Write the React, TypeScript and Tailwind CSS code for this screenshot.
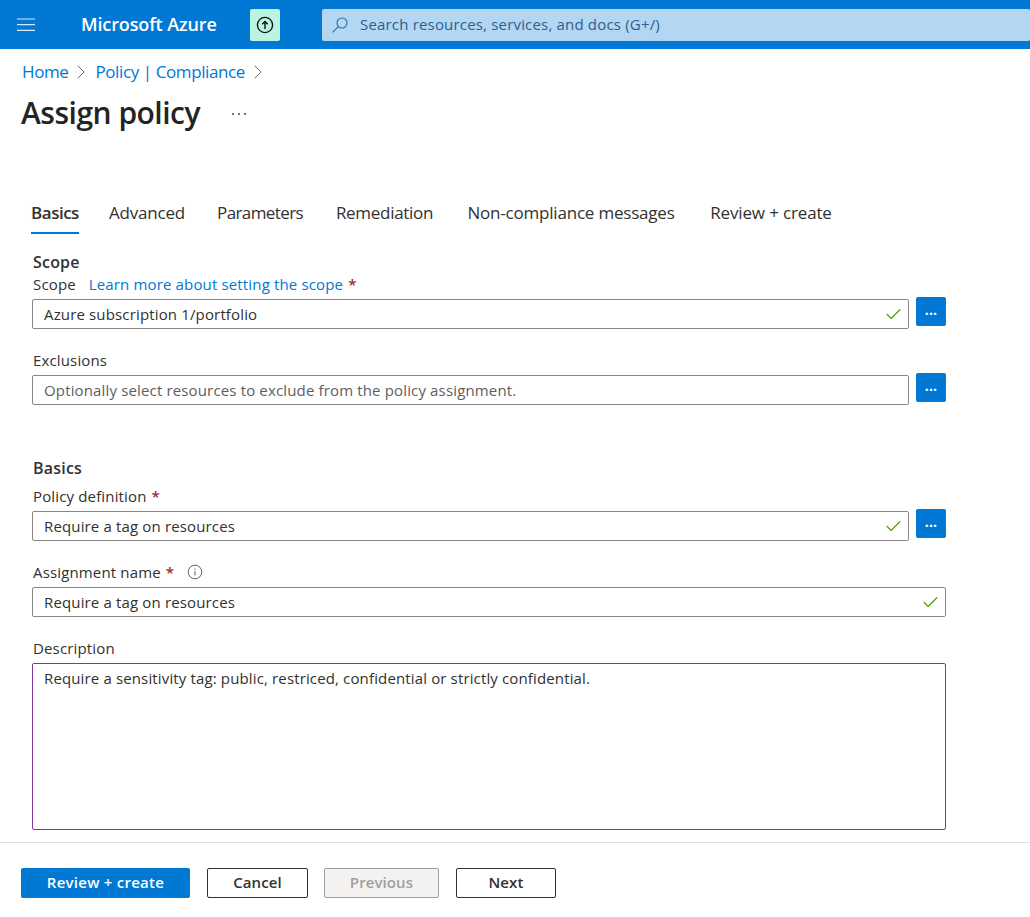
import { Check, ChevronRight } from "lucide-react";

const font = "font-['Open_Sans','Noto_Sans',sans-serif]";

function Star() {
  return <span className="ml-[5px] text-[15px] font-semibold text-[#a4262c]">*</span>;
}

function Field({ value, placeholder, check }: { value?: string; placeholder?: string; check?: boolean }) {
  return (
    <div className="flex h-[30px] min-w-0 flex-1 items-center justify-between rounded-[2px] border border-[#8a8886] bg-white pl-[11px] pr-[5px]">
      <span className={`text-[15px] tracking-[0.15px] ${value ? "text-[#323130]" : "text-[#605e5c]"}`}>{value || placeholder}</span>
      {check && <Check size={19} strokeWidth={1.6} className="text-[#57a300]" />}
    </div>
  );
}

function DotsButton() {
  return (
    <button className="ml-[7px] -mt-[2px] flex h-[29px] w-[30px] shrink-0 items-end justify-center rounded-[2px] bg-[#0078d4] pb-[9px] text-[14px] font-bold leading-none text-white">
      ...
    </button>
  );
}

const tabs = [
  { name: "Advanced", width: "w-[76px]", ml: "ml-[30px]", tracking: "tracking-[-0.2px]" },
  { name: "Parameters", width: "w-[86px]", ml: "ml-[32px]", tracking: "tracking-[-0.6px]" },
  { name: "Remediation", width: "w-[97px]", ml: "ml-[33px]", tracking: "tracking-[-0.3px]" },
  { name: "Non-compliance messages", width: "w-[208px]", ml: "ml-[34px]", tracking: "tracking-[-0.2px]" },
  { name: "Review + create", width: "w-[122px]", ml: "ml-[35px]", tracking: "tracking-[-0.15px]" },
];

export default function App() {
  return (
    <div className={`flex h-[917px] w-[1030px] flex-col overflow-hidden bg-white text-[#323130] ${font}`}>
      {/* top bar */}
      <header className="flex h-[49px] shrink-0 items-center bg-[#0078d4] text-white">
        <svg width="18" height="14" viewBox="0 0 18 14" fill="none" stroke="#d5e9f8" strokeWidth="1.2" className="ml-[17px]">
          <path d="M0 1h18M0 6.6h18M0 12.4h18" />
        </svg>
        <span className="ml-[46px] w-[136px] whitespace-nowrap text-[18px] font-semibold tracking-[-0.12px]">Microsoft Azure</span>
        <div className="ml-[33px] flex h-[32px] w-[30px] items-center justify-center rounded-[2px] bg-[#b9f5e0]">
          <svg width="18" height="18" viewBox="0 0 18 18" fill="none" stroke="#111" strokeWidth="1.4">
            <circle cx="9" cy="9" r="7.6" />
            <path d="M9 13V5.6M6.2 8.2 9 5.4l2.8 2.8" />
          </svg>
        </div>
        <div className="ml-[42px] flex h-[32px] w-[708px] items-center rounded-[2px] bg-[#b3d6f2] pl-[10px] text-[#2b5f8f]">
          <svg width="16" height="16" viewBox="0 0 16 16" fill="none" stroke="#2b6ca3" strokeWidth="1.1">
            <circle cx="10" cy="6" r="5" />
            <path d="M6.4 9.6.6 15.4" />
          </svg>
          <span className="ml-[12px] text-[15px] tracking-[0.18px]">Search resources, services, and docs (G+/)</span>
        </div>
      </header>

      {/* breadcrumb */}
      <nav className="ml-[22px] mt-[11px] flex h-[24px] items-center text-[17px] tracking-[-0.4px] text-[#0078d4]">
        <span>Home</span>
        <ChevronRight size={24} strokeWidth={0.9} className="ml-[1px] mr-[2px] text-[#605e5c]" />
        <span>Policy | Compliance</span>
        <ChevronRight size={24} strokeWidth={0.9} className="ml-[1px] text-[#605e5c]" />
      </nav>

      {/* title */}
      <div className="ml-[21px] mt-[8px] flex h-[40px] items-center">
        <h1 className="w-[179px] whitespace-nowrap text-[30px] font-semibold tracking-[-0.5px] text-[#252423]">Assign policy</h1>
        <svg width="16" height="4" viewBox="0 0 16 4" fill="#323130" className="ml-[31px] mt-[4px]">
          <circle cx="2" cy="2" r="0.9" />
          <circle cx="8" cy="2" r="0.9" />
          <circle cx="14" cy="2" r="0.9" />
        </svg>
      </div>

      {/* tabs */}
      <div className="ml-[31px] mt-[63px] flex h-[39px] text-[17px] text-[#323130]">
        <div className="flex h-full w-[48px] items-center justify-center whitespace-nowrap border-b-2 border-[#0078d4] pb-[2px] font-semibold tracking-[-0.5px]">Basics</div>
        {tabs.map((t) => (
          <div key={t.name} className={`flex h-full items-center justify-center whitespace-nowrap pb-[4px] ${t.width} ${t.ml} ${t.tracking}`}>
            {t.name}
          </div>
        ))}
      </div>

      {/* form */}
      <main className="ml-[32px] w-[914px] flex-1 text-[15px] tracking-[0.15px]">
        <h2 className="mt-[17px] flex h-[22px] items-center pl-[1px] text-[16px] font-semibold tracking-[0.2px]">Scope</h2>
        <div className="mt-[1px] flex h-[20px] items-center pl-[1px]">
          <span>Scope</span>
          <span className="ml-[13px] text-[#0078d4]">Learn more about setting the scope</span>
          <Star />
        </div>
        <div className="mt-[5px] flex items-start">
          <Field value="Azure subscription 1/portfolio" check />
          <DotsButton />
        </div>

        <div className="mt-[21px] flex h-[20px] items-center pl-[1px]">Exclusions</div>
        <div className="mt-[5px] flex items-start">
          <Field placeholder="Optionally select resources to exclude from the policy assignment." />
          <DotsButton />
        </div>

        <h2 className="mt-[52px] flex h-[22px] items-center pl-[1px] text-[16px] font-semibold tracking-[0.2px]">Basics</h2>
        <div className="mt-[7px] flex h-[20px] items-center pl-[1px]">
          Policy definition
          <Star />
        </div>
        <div className="mt-[5px] flex items-start">
          <Field value="Require a tag on resources" check />
          <DotsButton />
        </div>

        <div className="mt-[21px] flex h-[20px] items-center pl-[1px]">
          Assignment name
          <Star />
          <svg width="16" height="16" viewBox="0 0 16 16" fill="none" stroke="#605e5c" strokeWidth="1" className="ml-[13px]">
            <circle cx="8" cy="8" r="6.8" />
            <path d="M8 7v4.4M8 4.4v1.2" />
          </svg>
        </div>
        <div className="mt-[5px] flex">
          <Field value="Require a tag on resources" check />
        </div>

        <div className="mt-[21px] flex h-[20px] items-center pl-[1px]">Description</div>
        <div className="mt-[5px] h-[167px] rounded-[2px] border border-[#82339c] bg-white px-[11px] pt-[3px] tracking-[0.14px] text-[#323130]">
          Require a sensitivity tag: public, restriced, confidential or strictly confidential.
        </div>
      </main>

      {/* footer */}
      <footer className="flex h-[75px] shrink-0 items-start border-t border-[#e1dfdd] pl-[21px] pt-[25px] text-[15px] font-semibold tracking-[0.1px]">
        <button className="h-[30px] w-[169px] rounded-[2px] bg-[#0078d4] pb-[1px] tracking-[0.25px] text-white">Review + create</button>
        <button className="ml-[17px] h-[30px] w-[101px] rounded-[2px] border border-[#323130] bg-white pb-[1px]">Cancel</button>
        <button className="ml-[16px] h-[30px] w-[115px] rounded-[2px] border border-[#a19f9d] bg-[#f3f2f1] pb-[1px] text-[#a19f9d]">Previous</button>
        <button className="ml-[17px] h-[30px] w-[100px] rounded-[2px] border border-[#323130] bg-white pb-[1px]">Next</button>
      </footer>
    </div>
  );
}
